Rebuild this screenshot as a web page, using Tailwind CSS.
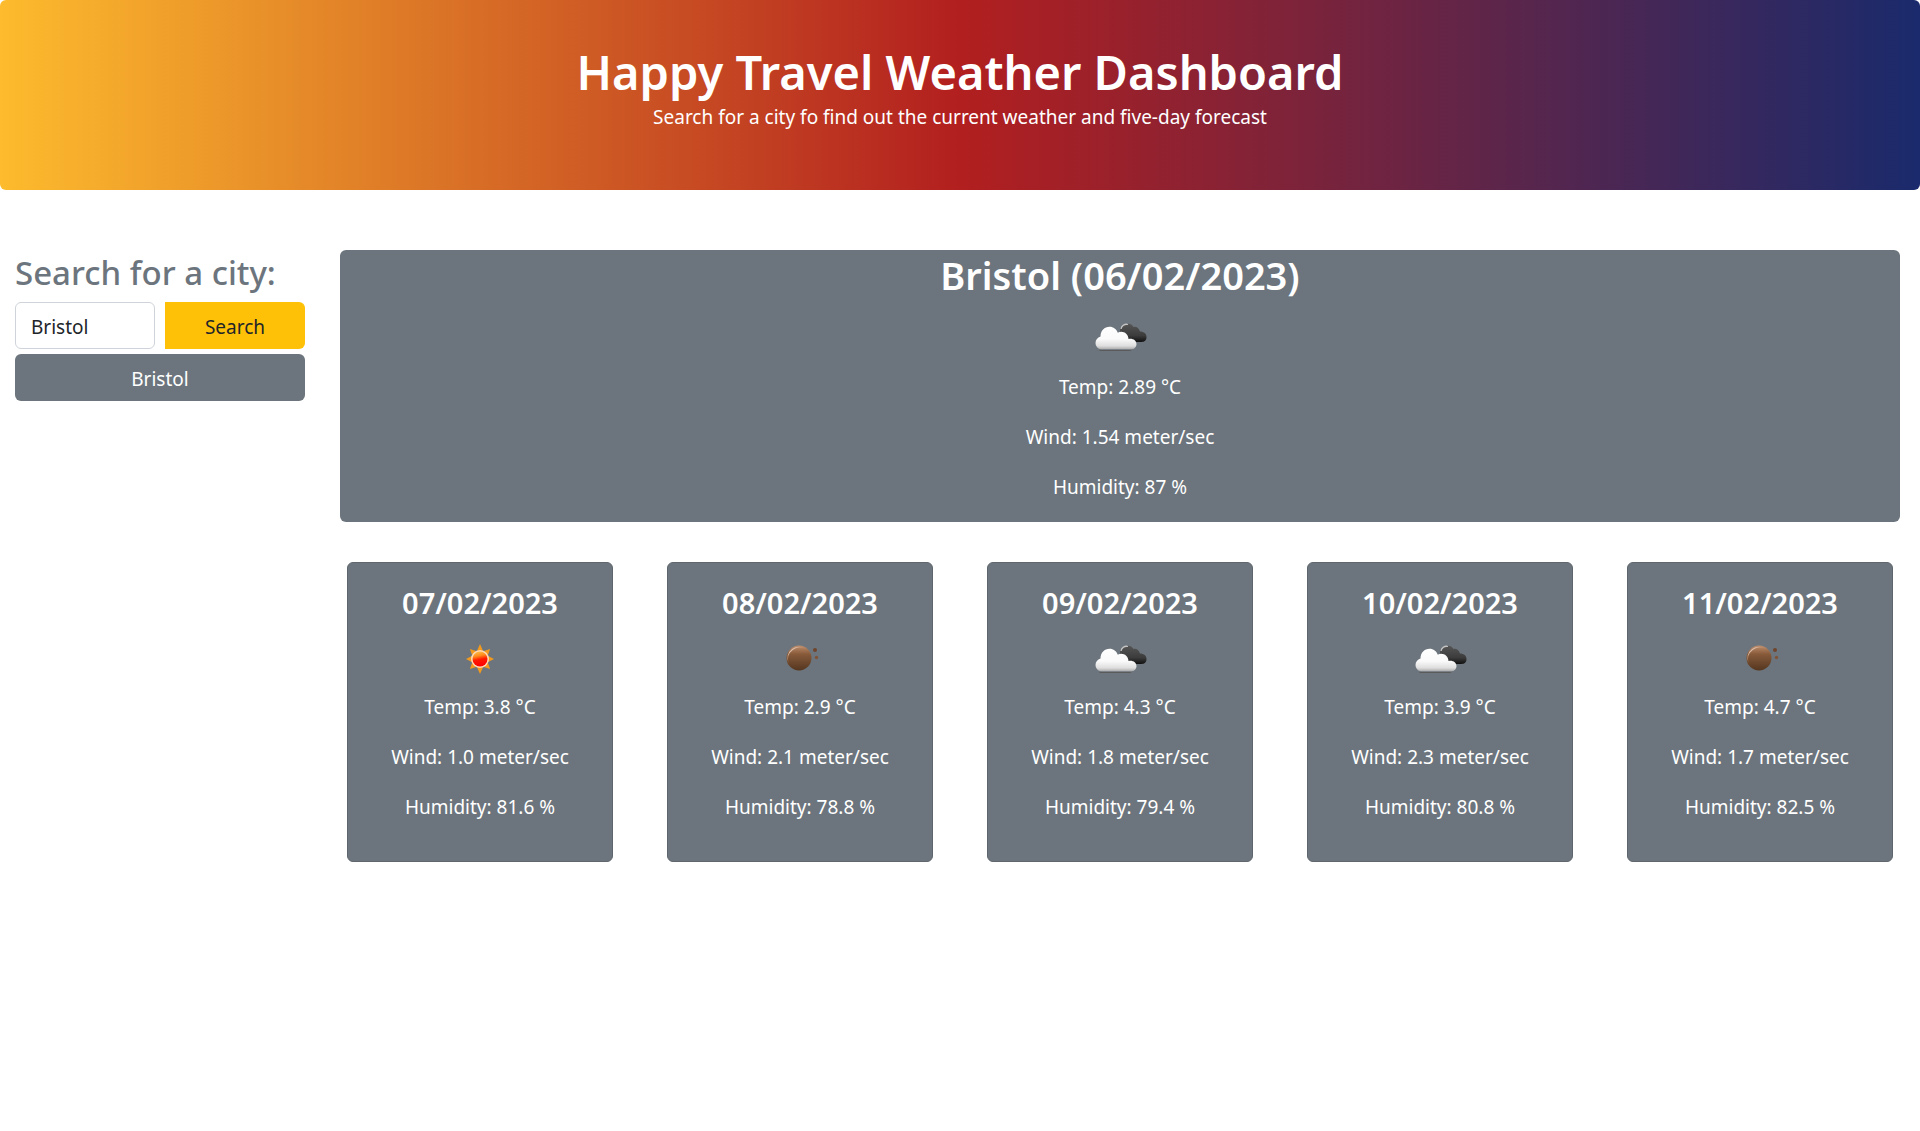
<!DOCTYPE html>
<html lang="en">
<head>
<meta charset="utf-8">
<meta name="viewport" content="width=device-width, initial-scale=1">
<title>Happy Travel Weather Dashboard</title>
<script src="https://cdn.jsdelivr.net/npm/@tailwindcss/browser@4"></script>
</head>
<body class="bg-white font-['Noto_Sans',sans-serif] text-[19px] leading-[30px] text-[#212529]">

<svg class="absolute size-0" aria-hidden="true">
  <defs>
    <linearGradient id="g-white" x1="0" y1="0" x2="0" y2="1"><stop offset="0" stop-color="#fff"/><stop offset=".55" stop-color="#fafafa"/><stop offset=".85" stop-color="#dedede"/><stop offset="1" stop-color="#aaa"/></linearGradient>
    <linearGradient id="g-dark" x1="0" y1="0" x2="0" y2="1"><stop offset="0" stop-color="#555"/><stop offset=".65" stop-color="#3c3c3c"/><stop offset="1" stop-color="#111"/></linearGradient>
    <linearGradient id="g-sun" x1=".3" y1="0" x2=".5" y2="1"><stop offset="0" stop-color="#ffc04a"/><stop offset=".3" stop-color="#ff8a1c"/><stop offset=".55" stop-color="#ff1a00"/><stop offset="1" stop-color="#ff0000"/></linearGradient>
    <linearGradient id="g-moon" x1="0" y1="0" x2="0" y2="1"><stop offset="0" stop-color="#c08e6c"/><stop offset=".35" stop-color="#875a3a"/><stop offset="1" stop-color="#54361f"/></linearGradient>
    <linearGradient id="g-shine" x1="0" y1="0" x2=".7" y2=".7"><stop offset="0" stop-color="#f3e4da"/><stop offset=".5" stop-color="#c9a58d"/><stop offset="1" stop-color="#c9a58d" stop-opacity="0"/></linearGradient>
  </defs>
  <symbol id="clouds" viewBox="0 0 62 62">
    <path d="M27 21a6 6 0 0 1 6-7c3-1 6 0 7.500 2.500 3-.5 5.500 1 6.500 4 4 0 6.500 2 6.500 4.700 0 3-2 4.300-5 4.300H34z" transform="translate(4 2) scale(1 1.150)" fill="url(#g-dark)"/>
    <path d="M32 23a5.500 5.500 0 0 1 7-4.500" fill="none" stroke="#c4c4c4" stroke-width="1.300"/>
    <path d="M7 41h31a4.500 4.500 0 0 0 5-4l-1 2.500-2 1.500-2 1H8z" transform="translate(3 3)" fill="#5a5a5a"/>
    <path d="M8 39.300A6.200 6.200 0 0 1 2.500 33c0-3 2-5.700 5-6.500 0-6 4-9.800 9-9.800 4 0 7 2.500 8.300 6 4.500-2.500 10.500.5 10.700 6.200 4.500-.8 8 1.600 8 5.100 0 3-2.200 5.300-5.500 5.300z" transform="translate(4 4)" fill="url(#g-white)"/>
  </symbol>
  <symbol id="sun" viewBox="0 0 62 62">
    <path d="M31 16l3.200 7.300 6.900-2.400-2.400 6.900L45 31l-6.300 3.200 2.400 6.900-6.900-2.400L31 46l-3.200-7.300-6.900 2.400 2.400-6.900L17 31l6.300-3.200-2.400-6.900 6.900 2.400z" fill="#f29a1e"/>
    <circle cx="31" cy="31" r="9" fill="#ffd9b8"/>
    <circle cx="31" cy="31" r="7.500" fill="url(#g-sun)"/>
  </symbol>
  <symbol id="moon" viewBox="0 0 62 62">
    <circle cx="30" cy="30" r="12.500" fill="url(#g-moon)"/>
    <path d="M19.500 35a11.500 11.500 0 0 1 18-13.500A12 12 0 0 0 19.500 35z" fill="url(#g-shine)"/>
    <circle cx="46" cy="22" r="2" fill="#6f452c"/>
    <circle cx="47.500" cy="29.500" r="1.700" fill="#805338"/>
  </symbol>
</svg>

<header class="rounded-md bg-[linear-gradient(to_right,#fdbb2d,#b21f1f,#1a2a6c)] px-5 pt-[42px] pb-[58px] text-center text-white">
  <h1 class="text-[47px] leading-[60px] font-semibold">Happy Travel Weather Dashboard</h1>
  <p>Search for a city fo find out the current weather and five-day forecast</p>
</header>

<div class="flex items-start pt-15">
  <aside class="w-1/6 shrink-0 px-[15px]">
    <form>
      <label for="city" class="block pt-0.5 pb-2 whitespace-nowrap text-[33px] leading-[42px] font-medium text-[#6c757d]">Search for a city:</label>
      <div class="grid grid-cols-2 gap-2.5">
        <input id="city" type="text" value="Bristol" class="h-[47px] w-full rounded-md border border-[#ced4da] px-[15px] pt-0.5 text-[#212529]">
        <button type="button" class="h-[47px] rounded-r-md bg-[#ffc107] pt-0.5 text-[#212529]">Search</button>
      </div>
    </form>
    <button type="button" class="mt-[5px] h-[47px] w-full rounded-md bg-[#6c757d] pt-0.5 text-white">Bristol</button>
  </aside>

  <main class="min-w-0 flex-1 px-5 text-center text-white">
    <section class="rounded-md bg-[#6c757d] pb-5">
      <h2 class="text-[38px] leading-[50px] font-semibold">Bristol (06/02/2023)</h2>
      <svg class="mx-auto mt-1.5 mb-1 size-[62px]" role="img" aria-label="Clouds"><use href="#clouds"/></svg>
      <div class="flex flex-col gap-5">
        <p>Temp: 2.89 °C</p>
        <p>Wind: 1.54 meter/sec</p>
        <p>Humidity: 87 %</p>
      </div>
    </section>

    <section id="forecast" class="mt-10 grid grid-cols-5 gap-[54px] px-[7px]"></section>
  </main>
</div>

<script>
  const days = [
    ['07/02/2023', 'sun', '3.8', '1.0', '81.6'],
    ['08/02/2023', 'moon', '2.9', '2.1', '78.8'],
    ['09/02/2023', 'clouds', '4.3', '1.8', '79.4'],
    ['10/02/2023', 'clouds', '3.9', '2.3', '80.8'],
    ['11/02/2023', 'moon', '4.7', '1.7', '82.5']
  ];
  document.getElementById('forecast').innerHTML = days.map(([date, icon, temp, wind, humidity]) => `
    <article class="rounded-md border border-[#5f666d] bg-[#6c757d] pt-[22px] pb-[39px] text-center">
      <h3 class="text-[29px] leading-[36px] font-semibold">${date}</h3>
      <svg class="mx-auto mt-[7px] mb-[2px] size-[62px]" role="img" aria-label="${icon}"><use href="#${icon}"/></svg>
      <div class="flex flex-col gap-5">
        <p>Temp: ${temp} °C</p>
        <p>Wind: ${wind} meter/sec</p>
        <p>Humidity: ${humidity} %</p>
      </div>
    </article>`).join('');
</script>
</body>
</html>
